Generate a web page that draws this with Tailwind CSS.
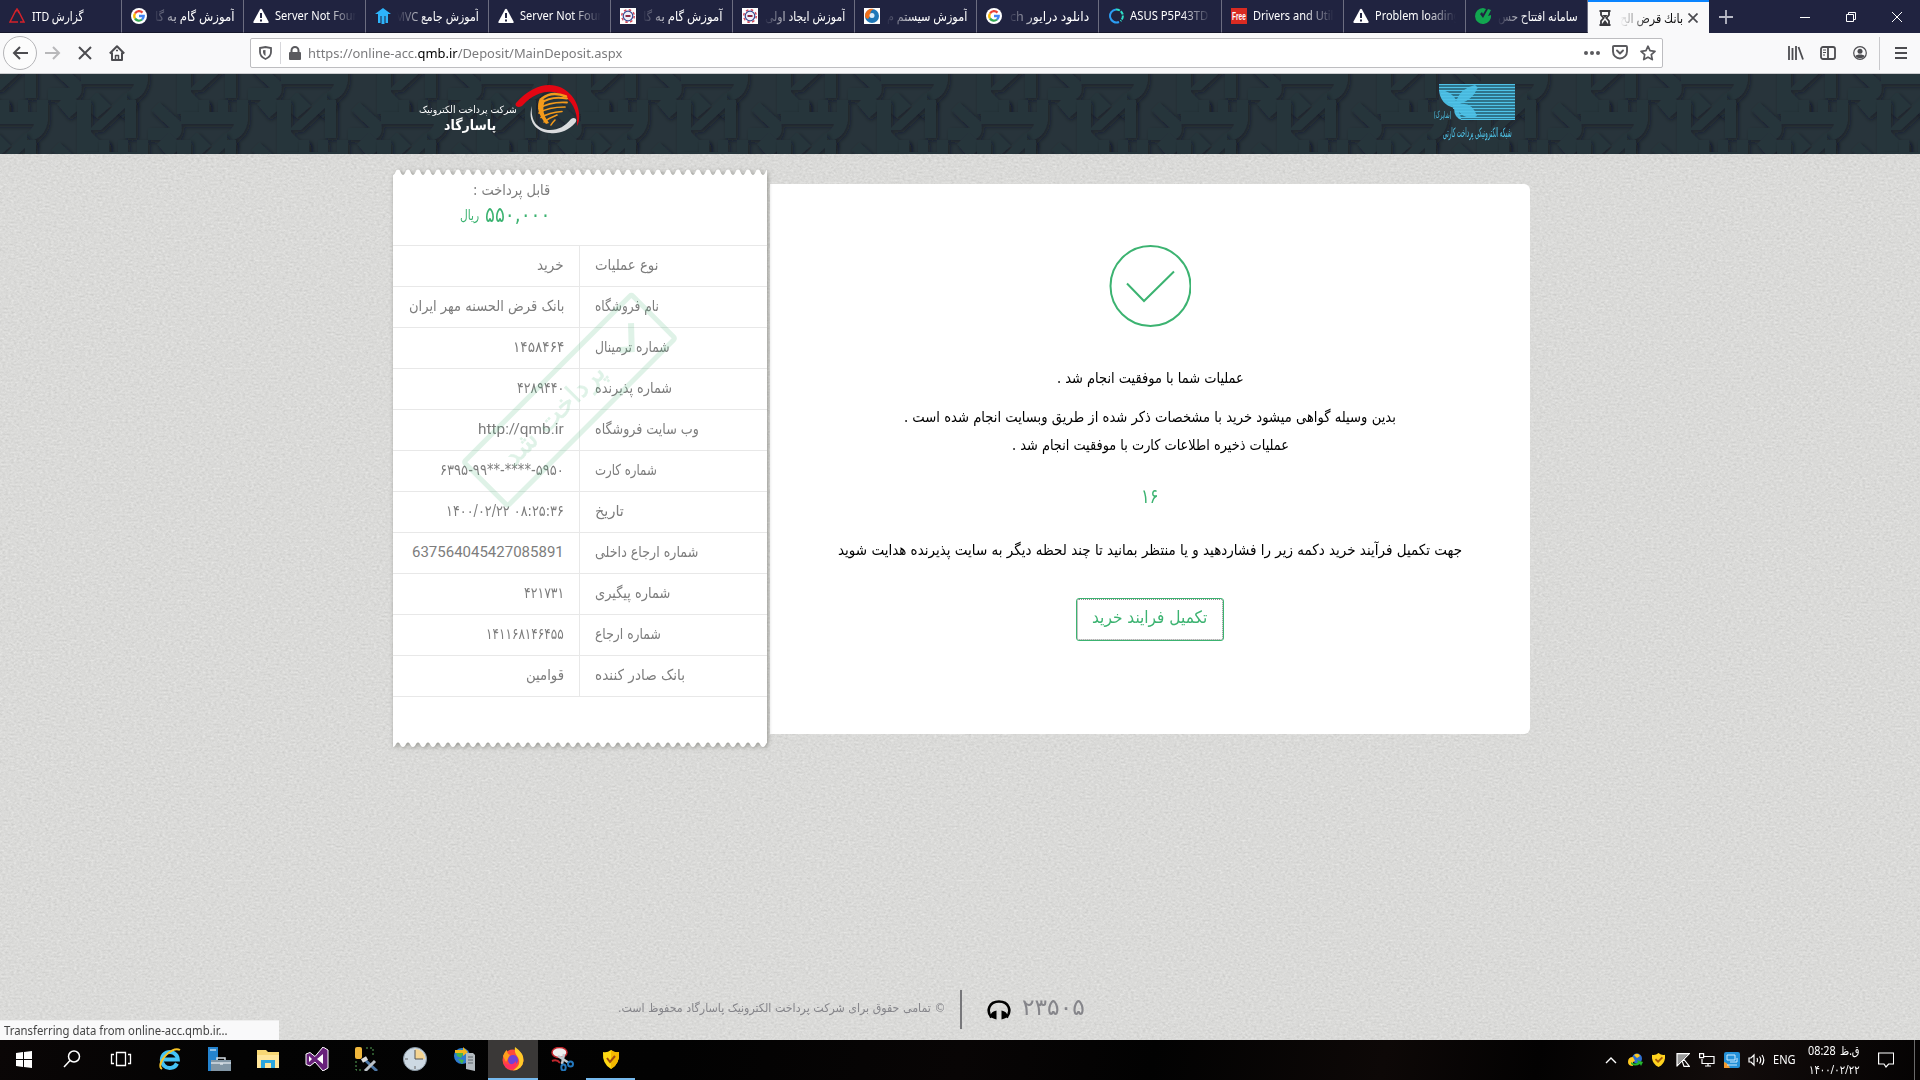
<!DOCTYPE html>
<html lang="fa">
<head>
<meta charset="utf-8">
<title>بانك قرض الحسنه</title>
<script src="https://cdn.jsdelivr.net/npm/@tailwindcss/browser@4"></script>
</head>
<body class="w-[1920px] h-[1080px] overflow-hidden flex flex-col bg-[#dadad8] font-['Noto_Sans','DejaVu_Sans',sans-serif]">

<!-- tab strip -->
<div class="h-[33px] shrink-0 bg-[#202340] flex text-white text-[12px]">
  <div id="tabs" class="flex h-full w-[1588px]"></div>
  <div class="w-[121px] h-full bg-[#f9f9fa] border-t-2 border-[#0a84ff] flex items-center pl-[11px] text-[#0c0c0d]">
    <svg width="12" height="16" viewBox="0 0 12 16" class="mr-[9px]"><path d="M.5 1h11M.5 15h11" stroke="#38383d" stroke-width="2"/><path d="M2 2v3l2.600 3L2 11v3M10 2v3L7.400 8l2.600 3v3" fill="none" stroke="#38383d" stroke-width="1.800"/><path d="M3.500 5h5L6 8zM3 14l3-4 3 4z" fill="#38383d"/></svg>
    <div dir="rtl" class="h-[18px] leading-[18px] text-[13px] [mask-image:linear-gradient(to_right,transparent,black_30px)]"><span data-w="63">بانك قرض الح</span></div>
    <svg width="10" height="10" viewBox="0 0 10 10" class="ml-[5px]" stroke="#4a4a4f" stroke-width="1.700"><path d="M.5.5l9 9M9.500.5l-9 9"/></svg>
  </div>
  <div class="flex-1 flex items-center pl-[10px]">
    <svg width="14" height="14" viewBox="0 0 14 14" stroke="#b9bac6" stroke-width="1.800"><path d="M7 0v14M0 7h14"/></svg>
    <div class="flex-1"></div>
    <div class="flex items-center gap-[36px] pr-[18px]">
      <svg width="10" height="10" stroke="#fff"><path d="M0 5.500h10"/></svg>
      <svg width="10" height="10" fill="none" stroke="#fff"><path d="M.5 2.500h7v7h-7zM2.500 2.500v-2h7v7h-2"/></svg>
      <svg width="10" height="10" stroke="#fff"><path d="M0 0l10 10M10 0L0 10"/></svg>
    </div>
  </div>
</div>

<!-- navigation toolbar -->
<div class="h-[41px] shrink-0 bg-[#f9f9fa] border-b border-[#cccccf] flex items-center">
  <div class="w-[250px] flex items-center pl-[3px]">
    <div class="size-[34px] rounded-full border border-[#b5b5b8] bg-[#fcfcfc] flex items-center justify-center">
      <svg width="16" height="14" viewBox="0 0 16 14" fill="none" stroke="#4c4c50" stroke-width="2"><path d="M16 7H2M8 1L2 7l6 6"/></svg>
    </div>
    <svg class="ml-[8px]" width="16" height="14" viewBox="0 0 16 14" fill="none" stroke="#b8b8ba" stroke-width="2"><path d="M0 7h14M8 1l6 6-6 6"/></svg>
    <svg class="ml-[17px]" width="14" height="14" viewBox="0 0 14 14" fill="none" stroke="#4c4c50" stroke-width="2"><path d="M1 1l12 12M13 1L1 13"/></svg>
    <svg class="ml-[17px]" width="16" height="16" viewBox="0 0 16 16" fill="none" stroke="#4c4c50" stroke-width="2" stroke-linejoin="round"><path d="M.8 8.500L8 1.200l7.200 7.300M3 7.500V15h10V7.500"/><path d="M6.500 15v-4.500h3V15M9 5.500H7" stroke-width="1.500"/></svg>
  </div>
  <div class="w-[1413px] h-[30px] mb-px bg-white border border-[#bdbdc0] rounded-[2px] flex items-center pl-[8px]">
    <svg width="13" height="14" viewBox="0 0 13 14" fill="none" stroke="#5a5a5e" stroke-width="1.800"><path d="M1 2l5.500-1L12 2v4c0 3-2 5.500-5.500 7C3 11.500 1 9 1 6z"/><path d="M6.500 4v6C5 9 4 7.500 4 6V4.200z" fill="#5a5a5e" stroke="none"/></svg>
    <div class="w-px h-[22px] bg-[#d7d7db] ml-[8px]"></div>
    <svg class="ml-[8px]" width="12" height="14" viewBox="0 0 12 14"><rect y="6" width="12" height="8" rx="1" fill="#5a5a5e"/><path d="M2.500 7V4.500a3.500 3.500 0 017 0V7" fill="none" stroke="#5a5a5e" stroke-width="2"/></svg>
    <div class="ml-[7px] h-[20px] leading-[20px] text-[13px] text-[#7b7b7d]"><span data-w="314">https://online-acc.<b class="font-normal text-black">qmb.ir</b>/Deposit/MainDeposit.aspx</span></div>
    <div class="flex-1"></div>
    <div class="flex items-center gap-[12px] pr-[6px]">
      <svg width="16" height="4" fill="#5a5a5e"><circle cx="2" cy="2" r="2"/><circle cx="8" cy="2" r="2"/><circle cx="14" cy="2" r="2"/></svg>
      <svg width="16" height="15" viewBox="0 0 16 15" fill="none" stroke="#5a5a5e" stroke-width="1.900" stroke-linecap="round" stroke-linejoin="round"><path d="M1 2q0-1 1-1h12q1 0 1 1v4.500a7 7 0 01-14 0z"/><path d="M5 5.500l3 3 3-3"/></svg>
      <svg width="16" height="16" viewBox="0 0 16 16" fill="none" stroke="#5a5a5e" stroke-width="1.700" stroke-linejoin="round"><path d="M8 1.200l2 4.500 5 .6-3.700 3.300 1 5L8 12.200l-4.300 2.400 1-5L1 6.300l5-.6z"/></svg>
    </div>
  </div>
  <div class="flex-1 flex items-center justify-end text-[#4c4c50]">
    <svg width="16" height="14" viewBox="0 0 16 14" stroke="currentColor" stroke-width="1.800"><path d="M1 0v14M4.500 2v12M8 0v14M10.500 1l4.500 12.500"/></svg>
    <svg class="ml-[16px]" width="16" height="14" viewBox="0 0 16 14" fill="none" stroke="currentColor" stroke-width="1.800"><rect x="1" y="1" width="14" height="12" rx="2"/><path d="M8 1v12"/><path d="M3 4h3M3 6.500h3M3 9h2" stroke-width="1"/></svg>
    <svg class="ml-[17px]" width="14" height="14" viewBox="0 0 14 14"><circle cx="7" cy="7" r="6.300" fill="none" stroke="currentColor" stroke-width="1.200"/><circle cx="7" cy="5.200" r="2.500" fill="currentColor"/><path d="M2.500 10c1-2 8-2 9 0-1.500 3-7.500 3-9 0z" fill="currentColor"/></svg>
    <div class="w-px h-[33px] bg-[#c9c9cc] ml-[12px]"></div>
    <svg class="ml-[15px] mr-[13px]" width="12" height="12" viewBox="0 0 12 12" stroke="currentColor" stroke-width="2"><path d="M0 1h12M0 6h12M0 11h12"/></svg>
  </div>
</div>

<!-- site header -->
<div class="h-[80px] shrink-0 relative bg-[#28343b]">
  <svg class="absolute inset-0" width="1920" height="80">
    <defs>
      <filter id="emboss" x="-10%" y="-20%" width="120%" height="150%"><feDropShadow dx="2" dy="2.500" stdDeviation="2" flood-color="#0a171d" flood-opacity=".55"/></filter>
      <g id="word" fill="#28343b" filter="url(#emboss)">
        <path d="M0-14h14v32l10 10h9v12H0z"/>
        <path d="M12 16L50-22v14L24 16z"/>
        <path d="M48-14h11v38H48z"/>
        <path d="M71 26V14h22L74-4l8-8 22 20q4 18-12 18z"/>
        <path d="M104 10V-2h18v-12h10v12h9v-12h10v12h9v-12h11v20q-2 18-20 22l-5-8q10-4 11-10z"/>
        <path d="M80 30l12-12 14 14 14-14 14 14 14-14 12 12-14 14-12-12-14 12-14-12-14 12z"/>
      </g>
      <pattern id="calligraphy" width="200" height="80" patternUnits="userSpaceOnUse">
        <g transform="translate(-23 0)"><use href="#word"/><use href="#word" x="200"/></g>
        <g transform="translate(77 40)"><use href="#word" x="-200"/><use href="#word"/></g>
        <g transform="translate(-23 80)"><use href="#word"/><use href="#word" x="200"/></g>
      </pattern>
    </defs>
    <rect width="1920" height="80" fill="url(#calligraphy)"/>
  </svg>
  <div class="relative h-full flex justify-between pl-[419px] pr-[405px] text-white">
    <div class="flex">
      <div class="w-[98px] pt-[28px] flex flex-col">
        <div dir="rtl" class="h-[16px] leading-[16px] text-[10px] font-['DejaVu_Sans',sans-serif]"><span data-w="98">شرکت پرداخت الکترونیک</span></div>
        <div dir="rtl" class="h-[18px] leading-[15px] text-[14px] pr-[21px] font-bold font-['DejaVu_Sans',sans-serif]"><span data-w="52">پاسارگاد</span></div>
      </div>
      <svg class="mt-[8px] -ml-[2px]" width="68" height="54" viewBox="0 0 68 54">
        <path d="M1 21C20-1 43-2 56 13c9 10 10 24 6 31 1-13-4-25-15-31C36 7 21 9 8 23c-4 4-9 1-7-2z" fill="#e30613"/>
        <path d="M17 24c-2 15 6 24 18 24 9 0 15-4 21-11 4-3 7 1 4 4-7 8-16 11-25 10C21 50 12 39 17 24z" fill="#dadcde"/>
        <g fill="none" stroke="#f39a1b" stroke-linecap="round"><path d="M27 16.500q10-8 24-2" stroke-width="2.500"/><path d="M25 21.500q11-8 27-5" stroke-width="2"/><path d="M24 26.500q11-7 28-6" stroke-width="1.800"/><path d="M24 31q9-6 26-6" stroke-width="1.700"/><path d="M26 35.500q8-5 21-6" stroke-width="1.600"/><path d="M29 40q5-4 13-7M36 43q1-2 4-5" stroke-width="1.600"/></g>
        <path d="M25 16q-6 12 6 26l3-1q-9-11-4-23z" fill="#f39a1b"/>
      </svg>
    </div>
    <div class="w-[82px] pt-[10px] text-[#4fc3e8]">
      <svg width="82" height="36" viewBox="0 0 82 36">
        <rect x="6" width="76" height="36" fill="#2f748b"/>
        <path d="M6 6l24 30H6z" fill="#28343b"/>
        <path d="M6 6q14 1 17 11Q28 4 42 1q4 3 2 4-4 10-17 15 12-2 17 12l-4 2q-9 0-14-6l3 8q-8-2-8-12Q7 20 6 6z" fill="#49b9de"/>
        <path d="M6 .5h76M6 3.500h76M6 6.500h76M8 9.500h74M8 12.500h74M10 15.500h72M15 18.500h67M20 21.500h62M20 24.500h62M22 27.500h60M23 30.500h59M25 33.500h57M28 35.500h54" stroke="#4fc3e8" stroke-width="1"/>
      </svg>
      <div class="flex flex-col -mt-[11px]">
        <div dir="rtl" class="h-[12px] leading-[12px] text-[9px] pr-[64px] whitespace-nowrap"><span data-w="17">(شاپرک)</span></div>
        <div dir="rtl" class="h-[22px] leading-[22px] text-[13px] pr-[3px]"><span data-w="69">شبکه الکترونیکی پرداخت کارتی</span></div>
      </div>
    </div>
  </div>
</div>

<!-- page -->
<div class="h-[886px] shrink-0 relative bg-[#dadad8]">
  <svg class="absolute inset-0" width="1920" height="886">
    <filter id="linen" x="0" y="0" width="100%" height="100%" color-interpolation-filters="sRGB"><feTurbulence type="fractalNoise" baseFrequency=".35 .5" numOctaves="2" seed="4"/><feColorMatrix values=".7 .7 .7 0 -.55 .7 .7 .7 0 -.55 .7 .7 .7 0 -.55 0 0 0 0 .1"/></filter>
    <rect width="1920" height="886" fill="#e4e4e2"/><rect width="1920" height="886" filter="url(#linen)"/>
  </svg>
  <div class="relative h-full flex flex-col">
    <div class="flex items-start pl-[393px] h-[600px]">

      <!-- receipt -->
      <div class="w-[374px] mt-[15px] relative z-10">
        <div class="drop-shadow-[1px_1px_2px_rgba(90,90,80,0.55)]">
          <svg class="block" width="374" height="6"><defs><pattern id="teeth" width="10" height="6" patternUnits="userSpaceOnUse"><path d="M0 6C3 5 2 .5 5 .5S7 5 10 6z" fill="#fff"/></pattern></defs><rect width="374" height="6" fill="url(#teeth)"/></svg>
          <div class="h-[567px] bg-white"></div>
          <svg class="block" width="374" height="6"><defs><pattern id="teethB" width="10" height="6" patternUnits="userSpaceOnUse"><path d="M0 0v5C3 5 2.500 .5 5 .5S7 5 10 5V0z" fill="#fff"/></pattern></defs><rect width="374" height="6" fill="url(#teethB)"/></svg>
        </div>
        <div class="absolute inset-x-0 top-[6px] text-[#7d7d7d]">
          <div class="h-[70px] pr-[217px] flex flex-col font-['DejaVu_Sans',sans-serif]" dir="rtl">
            <div class="h-[30px] leading-[30px] text-[15px]"><span data-w="77">قابل پرداخت :</span></div>
            <div class="h-[20px] leading-[20px] flex gap-[6px] text-[#3cb371]"><div class="text-[21px]"><span data-w="65">۵۵۰,۰۰۰</span></div><div class="text-[14px]"><span data-w="19">ریال</span></div></div>
          </div>
          <div id="rows" class="border-b border-[#e8e8e8]"></div>
        </div>
        <svg class="absolute left-0 top-0" width="374" height="400" viewBox="393 169 374 400">
          <g transform="rotate(-45 569.500 399.500)" opacity=".16">
            <rect x="450.500" y="369" width="237" height="62" rx="2" fill="none" stroke="#3cb371" stroke-width="5"/>
            <text x="548" y="408" text-anchor="middle" textLength="132" lengthAdjust="spacingAndGlyphs" font-family="DejaVu Sans" font-size="27" fill="#3cb371" stroke="#3cb371" stroke-width=".6" direction="rtl">پرداخت شد</text>
            <path d="M640 400l9 8 18-19" fill="none" stroke="#3cb371" stroke-width="6"/>
          </g>
        </svg>
      </div>

      <!-- result panel -->
      <div class="ml-[3px] mt-[30px] w-[760px] h-[550px] bg-white rounded-r-[6px] flex flex-col items-center text-black text-[15px] pt-[61px] font-['DejaVu_Sans',sans-serif]" dir="rtl">
        <svg width="82" height="82" viewBox="0 0 82 82" fill="none" stroke="#3cb371" stroke-width="2"><circle cx="41.500" cy="41" r="40"/><path d="M18 38.500L35 56 65 26.500"/></svg>
        <div class="mt-[41px] h-[20px] leading-[20px]"><span data-w="187">عملیات شما با موفقیت انجام شد .</span></div>
        <div class="mt-[19px] h-[20px] leading-[20px]"><span data-w="492">بدین وسیله گواهی میشود خرید با مشخصات ذکر شده از طریق وبسایت انجام شده است .</span></div>
        <div class="mt-[8px] h-[20px] leading-[20px]"><span data-w="277">عملیات ذخیره اطلاعات کارت با موفقیت انجام شد .</span></div>
        <div class="mt-[31px] h-[20px] leading-[20px] text-[20px] text-[#3cb371]"><span data-w="17">۱۶</span></div>
        <div class="mt-[34px] h-[20px] leading-[20px]"><span data-w="624">جهت تکمیل فرآیند خرید دکمه زیر را فشاردهید و یا منتظر بمانید تا چند لحظه دیگر به سایت پذیرنده هدایت شوید</span></div>
        <button class="mt-[38px] w-[148px] h-[43px] border border-[#3cb371] rounded-[3px] flex items-center justify-center text-[#3cb371] text-[17px] pb-[3px] outline-dotted outline-1 outline-[#8a8a8a] -outline-offset-[2px]"><span data-w="115">تکمیل فرایند خرید</span></button>
      </div>
    </div>

    <div class="flex-1"></div>
    <!-- footer -->
    <div class="flex items-center h-[39px] mb-[11px] pl-[617px] text-[#85858a] font-['DejaVu_Sans',sans-serif]">
      <div dir="rtl" class="text-[12px] h-[20px] leading-[20px] mb-[4px]"><span data-w="328">© تمامی حقوق برای شرکت پرداخت الکترونیک پاسارگاد محفوظ است.</span></div>
      <div class="w-[2px] h-[39px] bg-[#77777a] ml-[15px]"></div>
      <svg class="ml-[25px]" width="24" height="20" viewBox="0 0 24 20"><path d="M4.500 17.500C-1 11 2 1.500 12 1.500s13 9.500 7.500 16" fill="none" stroke="#000" stroke-width="2.600"/><path d="M9.500 10.500v9C6 18.500 4 17.500 3 16c1-3 3-5 6.500-5.500zM14.500 10.500v9c3.500-1 5.500-2 6.500-3.500-1-3-3-5-6.500-5.500z"/></svg>
      <div class="ml-[11px] text-[23px] h-[26px] leading-[26px] mb-[5px]"><span data-w="63">۲۳۵۰۵</span></div>
    </div>
  </div>
  <div class="absolute left-0 bottom-0 w-[279px] h-[20px] bg-[#f9f9fa] border-t border-[#eee] pl-[4px] leading-[20px] text-[12px] text-[#444]"><span data-w="224">Transferring data from online-acc.qmb.ir...</span></div>
</div>

<!-- taskbar -->
<div class="h-[40px] shrink-0 bg-[linear-gradient(100deg,#0a0606_0%,#030303_12%,#020202_35%,#080505_50%,#020202_60%,#0d0807_72%,#030202_80%,#120c0b_90%,#050303_100%)] flex text-white">
  <div id="task" class="flex h-full"></div>
  <div class="flex-1"></div>
  <div class="flex items-center w-[320px]">
    <svg class="ml-[5px]" width="12" height="8" fill="none" stroke="#fff" stroke-width="1.400"><path d="M1 7l5-5 5 5"/></svg>
    <svg class="ml-[10px]" width="16" height="14" viewBox="0 0 16 14"><circle cx="10" cy="5.500" r="5" fill="#2f6fd0"/><path d="M7 2q4-3 6 1l-3 2zM1 9q0-5 5-5l2 4q-3 0-2 5-5 0-5-4z" fill="#ffc91f"/><path d="M4 9q4 3 7 0l-1-2 6 2-2 4-1-2q-5 3-9 0z" fill="#24b72f"/></svg>
    <svg class="ml-[9px]" width="13" height="14" viewBox="0 0 15 16"><path d="M0 2q4 1 7.500-2Q11 3 15 2q1 10-7.500 14Q-1 12 0 2z" fill="#ffd21e"/><path d="M4 7l3 3 5-5" fill="none" stroke="#a65a0a" stroke-width="2"/></svg>
    <svg class="ml-[11px]" width="14" height="14" fill="none" stroke="#fff" stroke-width="1.200"><path d="M1 1h11L1 12z" fill="#999" stroke="none"/><path d="M1 13.400V.6h12.400L.6 13.400l5.500-5.500L8 13.400h5.400L8 6.500"/></svg>
    <svg class="ml-[9px]" width="16" height="14" fill="none" stroke="#fff" stroke-width="1.200"><path d="M4 3.500h11v7H3V6M9 10.500V13M6 13h6M.6.600h4v4h-4z"/></svg>
    <svg class="ml-[9px]" width="16" height="16" viewBox="0 0 16 16"><rect width="16" height="16" rx="2" fill="#2491d8"/><path d="M0 16v-6q4 1 6 6z" fill="#f39a2e"/><path d="M3 3h8v5H3zM6 10h7V6M3 13h10" fill="none" stroke="#cdeaff"/></svg>
    <svg class="ml-[8px]" width="17" height="14" fill="none" stroke="#fff" stroke-width="1.200"><path d="M1 5h2l3-3v10L3 9H1zM9 5q1 2 0 4M11.500 3.500q2.500 3.500 0 7M14 2q3.500 5 0 10"/></svg>
    <div class="ml-[8px] text-[12px] h-[18px] leading-[17px]"><span data-w="23">ENG</span></div>
    <div class="ml-[12px] flex flex-col items-center text-[12px] w-[52px]">
      <div class="h-[19px] leading-[18px] flex gap-[4px]"><span data-w="28">08:28</span><span dir="rtl" data-w="20">ق.ظ</span></div>
      <div class="h-[17px] leading-[17px] text-[12px]"><span data-w="51">۱۴۰۰/۰۲/۲۲</span></div>
    </div>
    <svg class="ml-[18px]" width="16" height="16" fill="none" stroke="#fff" stroke-width="1.200"><path d="M.6 1h15v11h-5L8 15l-2-3H.6z"/></svg>
    <div class="ml-[20px] w-px h-full bg-[#6a6a6a]"></div>
  </div>
</div>

<script>
const warn = '<svg width="16" height="16" viewBox="0 0 16 16"><path d="M7 1.500q1-1.500 2 0l6.500 12q.5 1.500-1 1.500h-13q-1.500 0-1-1.500z" fill="#fff"/><path d="M8 5v5M8 11.500v2" stroke="#202340" stroke-width="2"/></svg>';
const google = '<svg width="16" height="16" viewBox="0 0 16 16"><circle cx="8" cy="8" r="8" fill="#fff"/><g fill="none" stroke-width="2.300"><path d="M11.500 4.600A4.700 4.700 0 004 5.500" stroke="#ea4335"/><path d="M4 5.500a4.700 4.700 0 000 5" stroke="#fbbc05"/><path d="M4 10.500a4.700 4.700 0 007 1" stroke="#34a853"/><path d="M11 11.500q1.700-1.400 1.700-3.500H8" stroke="#4285f4"/></g></svg>';
const gear = '<svg width="16" height="16" viewBox="0 0 16 16"><rect width="16" height="16" fill="#fff"/><circle cx="8" cy="8" r="6.300" fill="none" stroke="#d4485a" stroke-width="1.500" stroke-dasharray="2.500 2.450"/><circle cx="8" cy="8" r="4.800" fill="#eceef8" stroke="#39488f" stroke-width="1.200"/><path d="M5.500 8h5" stroke="#8c2a44" stroke-width="2"/></svg>';
const tabs = [
  ['<svg width="16" height="16" fill="none" stroke="#d3222a" stroke-width="1.500"><path d="M7 2L1 14h8M9 2l6 12h-4M6.500 4L8 1l2 4"/></svg>', 'گزارش ITD', 52, 'first'],
  [google, 'آموزش گام به گا', 80, 'rtl'],
  [warn, 'Server Not Foun', 84, 'ltr'],
  ['<svg width="16" height="16"><path d="M8 0l8 6h-3v9h-2.500V8h-1v8h-3V8h-1v7H3V6H0z" fill="#2db4fb"/></svg>', 'آموزش جامع MVC', 84, 'rtl'],
  [warn, 'Server Not Foun', 84, 'ltr'],
  [gear, 'آموزش گام به گا', 80, 'rtl'],
  [gear, 'آموزش ایجاد اولی', 80, 'rtl'],
  ['<svg width="16" height="16" viewBox="0 0 16 16"><rect width="16" height="16" fill="#fff"/><circle cx="8" cy="8" r="7" fill="#1f78b8"/><path d="M1 8A7 7 0 0110 1q-5 2-3 6l-3 4q-3-1-3-3z" fill="#f0701a"/><circle cx="8" cy="7.500" r="2.500" fill="#d8ecfa"/></svg>', 'آموزش سیستم م', 80, 'rtl'],
  [google, 'دانلود درایور ch', 79, 'rtl'],
  ['<svg width="16" height="16" fill="none" stroke-width="2"><path d="M11 14A6.500 6.500 0 118 1.500" stroke="#2b9df4"/><path d="M8 1.500A6.500 6.500 0 0112.500 13" stroke="#2fe0c8" stroke-dasharray="4 1"/></svg>', 'ASUS P5P43TD', 78, 'ltr'],
  ['<svg width="16" height="16"><rect width="16" height="16" fill="#d92b22"/><text x="1" y="12" font-size="11" font-weight="bold" font-family="Liberation Sans" textLength="14" lengthAdjust="spacingAndGlyphs" fill="#fff">Free</text></svg>', 'Drivers and Util', 80, 'ltr'],
  [warn, 'Problem loading', 85, 'ltr'],
  ['<svg width="16" height="16"><path d="M8 0a8 8 0 108 7L13 8l3-6-3-1-5 9-3-4 2-2 1 2 3-5z" fill="#12a650"/></svg>', 'سامانه افتتاح حس', 80, 'rtl'],
];
const fade = {
  first: '',
  rtl: '[mask-image:linear-gradient(to_right,transparent,black_30px)]',
  ltr: '[mask-image:linear-gradient(to_left,transparent,black_30px)]'
};
document.getElementById('tabs').innerHTML = tabs.map(([icon, label, w, kind], i) => `
  <div class="flex-1 h-full flex items-center pl-[9px] border-r border-[#6c6d80] border-b border-b-[#15172b]">
    ${icon}
    <div dir="${kind === 'ltr' ? 'ltr' : 'rtl'}" class="ml-[6px] h-[20px] leading-[20px] overflow-hidden ${kind === 'ltr' ? 'text-[12px]' : 'text-[13px]'} ${kind === 'first' ? 'w-[53px]' : 'w-[81px]'} ${fade[kind]}"><span data-w="${w}">${label}</span></div>
  </div>`).join('');

const rows = [
  ['نوع عملیات', 63, 'خرید', 27],
  ['نام فروشگاه', 64, 'بانک قرض الحسنه مهر ایران', 155],
  ['شماره ترمینال', 75, '۱۴۵۸۴۶۴', 51],
  ['شماره پذیرنده', 77, '۴۲۸۹۴۴۰', 47],
  ['وب سایت فروشگاه', 104, 'http://qmb.ir', 86, 1],
  ['شماره کارت', 62, '۶۳۹۵-۹۹**-****-۵۹۵۰', 124],
  ['تاریخ', 29, '۱۴۰۰/۰۲/۲۲ ۰۸:۲۵:۳۶', 118],
  ['شماره ارجاع داخلی', 103, '637564045427085891', 152, 1],
  ['شماره پیگیری', 75, '۴۲۱۷۳۱', 40],
  ['شماره ارجاع', 66, '۱۴۱۱۶۸۱۴۶۴۵۵', 78],
  ['بانک صادر کننده', 90, 'قوامین', 38],
];
document.getElementById('rows').innerHTML = rows.map(([k, kw, v, vw, latin]) => `
  <div class="h-[41px] border-t border-[#e8e8e8] flex text-[15px] leading-[38px]">
    <div class="w-[187px] border-r border-[#e8e8e8] flex justify-end pr-[15px] ${latin ? "font-['Roboto',sans-serif]" : "font-['DejaVu_Sans',sans-serif]"}"><span data-w="${vw}">${v}</span></div>
    <div class="pl-[15px] font-['DejaVu_Sans',sans-serif]"><span dir="rtl" data-w="${kw}">${k}</span></div>
  </div>`).join('');

const shield = '<path d="M4 5q4 1 8-2 4 3 8 2 1 12-8 17Q3 17 4 5z" fill="#ffd913"/><path d="M12 3q4 3 8 2 1 12-8 17z" fill="#f4b800"/><path d="M8 11l3 4 5-6" fill="none" stroke="#a04a10" stroke-width="2"/>';
const icons = [
  [48, '<path d="M4 6l7-1v7H4zM12 5l8-1v8h-8zM4 13h7v7l-7-1zM12 13h8v8l-8-1z" fill="#fff"/>'],
  [48, '<g fill="none" stroke="#fff" stroke-width="1.500"><circle cx="14" cy="9.500" r="5.500"/><path d="M10 13.500L4 20"/></g>'],
  [49, '<path d="M7.500 5.500h9v13h-9zM5 7.500H2.500v9H5M19 7.500h2.500v9H19" fill="none" stroke="#fff" stroke-width="1.300"/>'],
  [49, '<path d="M19 16.500A8 8 0 1119.800 12.500H6" fill="none" stroke="#45c3f5" stroke-width="4"/><path d="M4 22C-3 18 13-2 22 3" fill="none" stroke="#f7c325" stroke-width="2"/>'],
  [49, '<path d="M1 0h10v24H1z" fill="#2383cf"/><path d="M3 3h6" stroke="#fff"/><path d="M4 13h20v11H4z" fill="#8296a5"/><path d="M4 16h20M10 13v-2h8v2M13 17h3" stroke="#d5dde3" fill="none" stroke-width="1.500"/>'],
  [49, '<path d="M1 3h9l2 2h11v16H1z" fill="#f7d774"/><path d="M1 8h22v13H1z" fill="#ffe69a"/><path d="M5 21v-8h14v8h-4v-5H9v5z" fill="#2ba6de"/>'],
  [49, '<path d="M1 7l4-1.500 5 4L18 0l5 3v18l-5 3-8-9-5 4-4-1.500z" fill="#68217a" stroke="#fff"/><path d="M4 9v6l3-3zM12 12l6-5v10z" fill="#fff"/>'],
  [49, '<rect x="1" y="0" width="7" height="12" rx="2" fill="#f0b73c"/><path d="M12 1h7v7M2 14v9h6" stroke="#57a557" fill="none" stroke-dasharray="2 2"/><path d="M10 12l13 12" stroke="#4f79a8" stroke-width="3"/><path d="M21 14L11 24" stroke="#bcc3c9" stroke-width="3"/><path d="M8 14l5-3" stroke="#ddd" stroke-width="4"/>'],
  [49, '<circle cx="12" cy="12" r="11.500" fill="#cdd9e3" stroke="#8a99a5"/><path d="M12 12V2a10 10 0 0110 10z" fill="#f4d492"/><path d="M12 3v9h8" stroke="#555" fill="none"/><path d="M12 19v3M2 12h3" stroke="#666"/>'],
  [49, '<circle cx="10" cy="9" r="8" fill="#2e7bd0"/><path d="M4 5q5-5 8 0l-3 6-4-2zM6 12l6 1-2 4z" fill="#43b64a"/><path d="M3 3h8V0l5 5-5 4V6H3z" fill="#f2b61c"/><path d="M14 6h7l2 2v16l-9-2z" fill="#b4bbc0"/><path d="M16 10h5M16 13h5M16 16h5" stroke="#5f676d"/>'],
  [50, '<circle cx="12" cy="13" r="10.500" fill="#ff4b3a"/><path d="M14 0q9 6 8.500 14A10.500 10.500 0 0112 23.500Q22 17 16 9q-3-4-2-9z" fill="#ffca28"/><path d="M2 9q2-5 4-6 0 4 3 5l-4 7z" fill="#ff9f1c"/><circle cx="12" cy="13" r="5" fill="#7142d6"/><path d="M3 16q8 4 12-2 1 9-7 8-4-1-5-6z" fill="#ff2e63"/>'],
  [48, '<ellipse cx="9.500" cy="5.500" rx="7.500" ry="5" fill="#eee" stroke="#c0272d" stroke-width="1.500"/><path d="M2 14q5-2 8 2" stroke="#c0272d" stroke-width="2" fill="none"/><path d="M8 9l11 7M14 7l-2 10" stroke="#c3cad0" stroke-width="2.500"/><circle cx="20.500" cy="17" r="2.500" fill="none" stroke="#2477bb" stroke-width="2"/><ellipse cx="13.500" cy="20.500" rx="2.200" ry="3" fill="none" stroke="#2477bb" stroke-width="2"/>'],
  [49, shield],
];
document.getElementById('task').innerHTML = icons.map(([w, s], i) => `
  <div class="h-full flex items-center justify-center border-b-2 ${i === 10 ? 'bg-[#3a3837] border-[#76b9ed]' : i === 12 ? 'border-[#76b9ed]' : 'border-transparent'}" style="width:${w}px"><svg width="24" height="24" viewBox="0 0 24 24">${s}</svg></div>`).join('');

// Condense or stretch each label horizontally to its column width,
// again whenever its natural size changes.
const fit = inner => {
  const el = inner.parentElement;
  const rtl = (el.closest('[dir]')?.dir) === 'rtl';
  if (!inner.offsetWidth) return;
  inner.style.transformOrigin = (rtl ? 'right' : 'left') + ' center';
  inner.style.transform = `scaleX(${el.dataset.w / inner.offsetWidth})`;
};
const watcher = new ResizeObserver(entries => entries.forEach(e => fit(e.target)));
document.querySelectorAll('[data-w]').forEach(el => {
  const inner = document.createElement('span');
  inner.className = 'inline-block whitespace-nowrap';
  while (el.firstChild) inner.appendChild(el.firstChild);
  el.appendChild(inner);
  el.classList.add('inline-block', 'whitespace-nowrap', 'align-top');
  el.style.width = el.dataset.w + 'px';
  watcher.observe(inner);
});
window.addEventListener('load', () => watcher && document.querySelectorAll('[data-w] > span').forEach(fit));
</script>
</body>
</html>
